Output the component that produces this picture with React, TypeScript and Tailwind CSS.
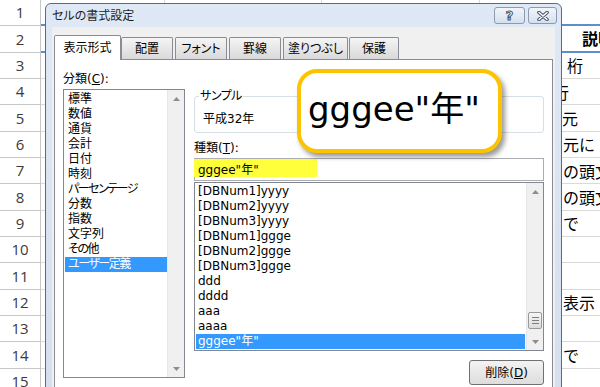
import React from "react";

const jp = "font-['DejaVu_Sans','Noto_Sans_CJK_JP',sans-serif] [font-feature-settings:'palt']";

const sheet = [
  { n: 1, t: "", c: "" },
  { n: 2, t: "説明", c: "pl-[102px] font-bold" },
  { n: 3, t: "桁", c: "pl-[87px]" },
  { n: 4, t: "行", c: "pl-[73px]" },
  { n: 5, t: "元", c: "pl-[82px]" },
  { n: 6, t: "元に", c: "pl-[83px]" },
  { n: 7, t: "の頭文字", c: "pl-[83px]" },
  { n: 8, t: "の頭文字", c: "pl-[83px]" },
  { n: 9, t: "で", c: "pl-[83px]" },
  { n: 10, t: "", c: "" },
  { n: 11, t: "", c: "" },
  { n: 12, t: "表示", c: "pl-[83px]" },
  { n: 13, t: "", c: "" },
  { n: 14, t: "で", c: "pl-[83px]" },
  { n: 15, t: "", c: "" },
];

// kana-heavy labels are set tighter, like Meiryo UI
const categories = [
  { t: "標準", k: false },
  { t: "数値", k: false },
  { t: "通貨", k: false },
  { t: "会計", k: false },
  { t: "日付", k: false },
  { t: "時刻", k: false },
  { t: "パーセンテージ", k: true },
  { t: "分数", k: false },
  { t: "指数", k: false },
  { t: "文字列", k: false },
  { t: "その他", k: true },
  { t: "ユーザー定義", k: true },
];

const formats = [
  "[DBNum1]yyyy",
  "[DBNum2]yyyy",
  "[DBNum3]yyyy",
  "[DBNum1]ggge",
  "[DBNum2]ggge",
  "[DBNum3]ggge",
  "ddd",
  "dddd",
  "aaa",
  "aaaa",
  'gggee"年"',
];

const Arrow = ({ up }: { up?: boolean }) => (
  <svg width="7" height="4" viewBox="0 0 7 4">
    <path d={up ? "M0 4L3.5 0L7 4Z" : "M0 0L7 0L3.5 4Z"} fill="#8d8d8d" />
  </svg>
);

const Tab = ({ label, w, ml }: { label: string; w: string; ml: string }) => (
  <div
    className={`${w} ${ml} h-[22px] flex items-center justify-center border border-b-0 border-[#898c95] rounded-t-[2px] bg-gradient-to-b from-[#f5f5f5] to-[#d9d9d9] text-[12px] text-black`}
  >
    {label}
  </div>
);

export default function App() {
  return (
    <div className="relative w-[600px] h-[387px] overflow-hidden bg-white">
      {/* spreadsheet behind the dialog */}
      <div className="flex flex-col">
        {sheet.map((r) => (
          <div key={r.n} className="flex h-[26.33px] shrink-0">
            <div className="w-[41px] shrink-0 border-r border-b border-[#c6c6c6] flex items-center justify-center font-['Open_Sans',sans-serif] text-[15px] text-[#3a3a3a]">
              {r.n}
            </div>
            <div
              className={`flex-1 flex ${
                r.n <= 2 ? "border-b-2 border-[#5b8fce]" : "border-b border-[#d9d9d9]"
              }`}
            >
              <div className="w-[124px] border-r border-[#d9d9d9]" />
              <div className="w-[157px] border-r border-[#d9d9d9]" />
              <div className="w-[158px] border-r border-[#d9d9d9]" />
              <div
                className={`flex-1 flex items-center whitespace-nowrap font-['Noto_Sans_CJK_JP',sans-serif] text-[16px] text-black ${r.c}`}
              >
                {r.t}
              </div>
            </div>
          </div>
        ))}
      </div>

      {/* format cells dialog */}
      <div className={`absolute left-[45px] top-[3px] w-[517px] h-[420px] rounded-t-[6px] border border-[#5d6a7c] bg-gradient-to-b from-[#dfe9f5] to-[#d3dfee] ${jp}`}>
        <div className="h-[23px] flex justify-between pl-[6px] pr-[4px]">
          <span className="self-center text-[12px] text-[#1e1e1e]">セルの書式設定</span>
          <div className="flex gap-[3px] pt-[3px]">
            <div className="w-[31px] h-[17px] flex items-center justify-center rounded-[3px] border border-[#8a9ab0] bg-gradient-to-b from-[#f1f5fb] to-[#d6e0ed] font-['DejaVu_Sans',sans-serif] font-bold text-[13px] leading-none text-white [-webkit-text-stroke:1px_#47556a]">
              ?
            </div>
            <div className="w-[29px] h-[17px] flex items-center justify-center rounded-[3px] border border-[#8a9ab0] bg-gradient-to-b from-[#f1f5fb] to-[#d6e0ed]">
              <svg width="12" height="10" viewBox="0 0 12 10">
                <path d="M2 1.5L10 8.5M10 1.5L2 8.5" stroke="#47556a" strokeWidth="3.6" strokeLinecap="round" />
                <path d="M2 1.5L10 8.5M10 1.5L2 8.5" stroke="#ffffff" strokeWidth="1.6" strokeLinecap="round" />
              </svg>
            </div>
          </div>
        </div>

        <div className="mx-[6px] h-[400px] bg-[#f0f0f0] pl-[2px] pt-[8px]">
          <div className="flex items-end h-[24px]">
            <div className="relative z-10 -mb-px w-[67px] h-[25px] flex items-center justify-center border border-b-0 border-[#898c95] rounded-t-[2px] bg-white text-[12px] text-black">
              表示形式
            </div>
            <Tab label="配置" w="w-[52px]" ml="ml-0" />
            <Tab label="フォント" w="w-[52px]" ml="ml-[2px]" />
            <Tab label="罫線" w="w-[52px]" ml="ml-[2px]" />
            <Tab label="塗りつぶし" w="w-[65px]" ml="ml-[2px]" />
            <Tab label="保護" w="w-[50px]" ml="ml-[1px]" />
          </div>

          <div className="w-[499px] h-[360px] border border-[#898c95] bg-white flex gap-[9px] pl-[8px] pt-[11px] text-[12px] text-black">
            {/* category column */}
            <div className="w-[122px] flex flex-col">
              <div className="h-[16px] leading-[16px]">
                分類(<span className="underline">C</span>):
              </div>
              <div className="mt-[2px] h-[289px] border border-[#828790] flex">
                <div className="flex-1 pl-[1px] pt-[2px]">
                  {categories.map((c) => (
                    <div
                      key={c.t}
                      className={`h-[15px] leading-[15px] pl-[3px] whitespace-nowrap ${
                        c.k ? "tracking-[-1.5px]" : ""
                      } ${c.t === "ユーザー定義" ? "bg-[#3399ff] text-white" : ""}`}
                    >
                      {c.t}
                    </div>
                  ))}
                </div>
                <div className="w-[17px] bg-[#f0f0f0] border-l border-[#e6e6e6] flex flex-col justify-between">
                  <div className="h-[17px] flex items-center justify-center">
                    <Arrow up />
                  </div>
                  <div className="h-[17px] flex items-center justify-center">
                    <Arrow />
                  </div>
                </div>
              </div>
            </div>

            {/* type column */}
            <div className="w-[350px] flex flex-col">
              <div className="relative mt-[25px] h-[37px] border border-[#d5dfe5] rounded-[3px] pl-[8px] pt-[14px]">
                <span className="absolute -top-[9px] left-[4px] px-[1px] bg-white leading-[16px] tracking-[-0.5px]">サンプル</span>
                <div className="leading-[16px]">平成32年</div>
              </div>
              <div className="mt-[7px] h-[16px] leading-[16px]">
                種類(<span className="underline">T</span>):
              </div>
              <div className="relative mt-[2px] h-[23px] border border-[#abadb3] flex items-center pl-[3px]">
                <div className="absolute -left-px top-0 w-[123px] h-[18px] bg-[#ffff3c]" />
                <span className="relative">gggee"年"</span>
              </div>
              <div className="mt-[1px] h-[169px] border border-[#828790] flex">
                <div className="flex-1 px-[1px] pt-[1px]">
                  {formats.map((f, i) => (
                    <div
                      key={f}
                      className={`h-[15px] leading-[15px] pl-[2px] whitespace-nowrap ${
                        i === formats.length - 1 ? "bg-[#3399ff] text-white" : ""
                      }`}
                    >
                      {f}
                    </div>
                  ))}
                </div>
                <div className="w-[17px] bg-[#f0f0f0] border-l border-[#e6e6e6] flex flex-col">
                  <div className="h-[17px] flex items-center justify-center">
                    <Arrow up />
                  </div>
                  <div className="flex-1" />
                  <div className="mx-auto w-[14px] h-[17px] rounded-[2px] border border-[#9a9a9a] bg-gradient-to-b from-[#f6f6f6] to-[#dcdcdc] flex flex-col items-center justify-center gap-[2px]">
                    <div className="w-[7px] h-px bg-[#7e7e7e]" />
                    <div className="w-[7px] h-px bg-[#7e7e7e]" />
                    <div className="w-[7px] h-px bg-[#7e7e7e]" />
                  </div>
                  <div className="h-[4px]" />
                  <div className="h-[17px] flex items-center justify-center">
                    <Arrow />
                  </div>
                </div>
              </div>
              <div className="self-end mt-[9px] w-[75px] h-[25px] rounded-[3px] border border-[#707070] bg-gradient-to-b from-[#f3f3f3] to-[#dddddd] flex items-center justify-center">
                削除(<span className="underline">D</span>)
              </div>
            </div>
          </div>
        </div>
      </div>

      {/* yellow callout */}
      <div className="absolute left-[297px] top-[69px] w-[205px] h-[84px] rounded-[20px] border-4 border-[#fcc400] bg-white shadow-[3px_4px_5px_rgba(0,0,0,0.4)] pl-[7px] pt-[19px]">
        <div className="font-['DejaVu_Sans','Noto_Sans_CJK_JP',sans-serif] text-[34px] leading-[34px] text-black whitespace-nowrap">
          gggee"年"
        </div>
      </div>
    </div>
  );
}
